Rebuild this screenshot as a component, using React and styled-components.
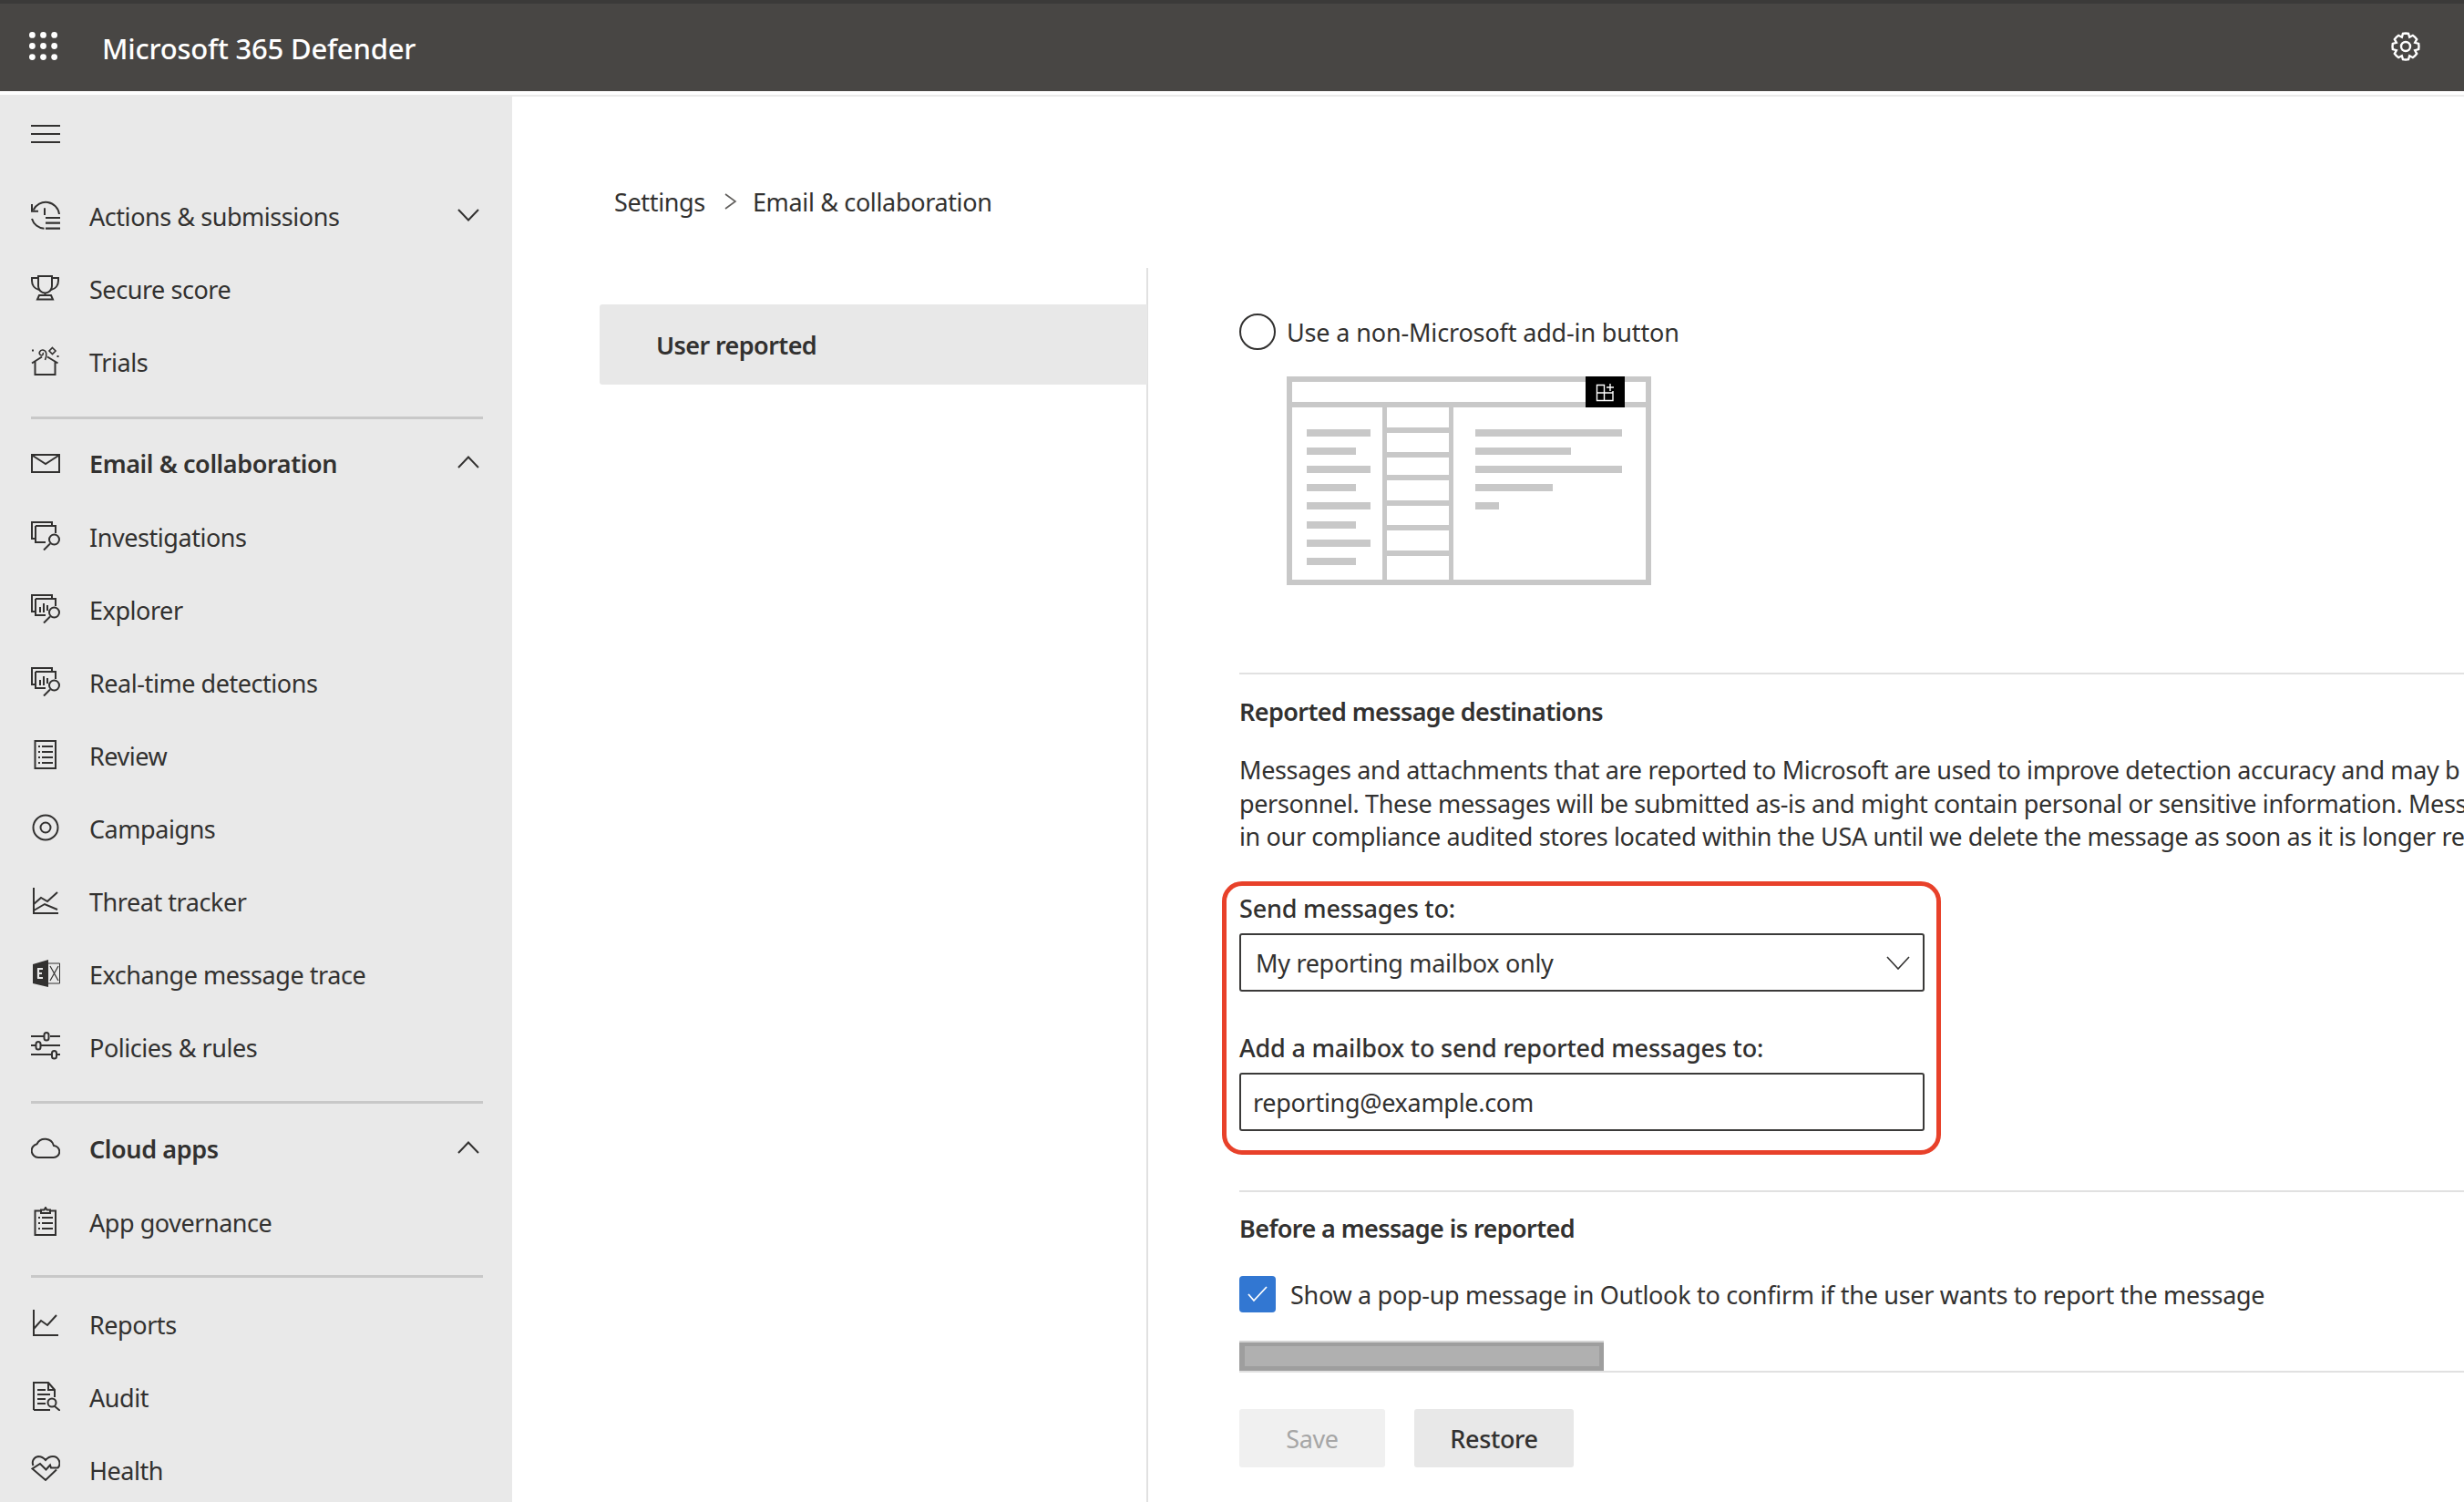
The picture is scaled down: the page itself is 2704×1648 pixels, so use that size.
import React from 'react';
import styled, { createGlobalStyle } from 'styled-components';

const Global = createGlobalStyle`
  html, body { margin: 0; padding: 0; background: #fff; overflow: hidden; }
  * { box-sizing: border-box; }
`;

const FONT = `"Noto Sans", "Open Sans", sans-serif`;

const Page = styled.div`
  width: 2704px; height: 1648px; overflow: hidden; display: flex; flex-direction: column;
  font-family: ${FONT}; font-size: 27px; color: #323130; background: #fff;
`;
const TopBar = styled.header`
  height: 100px; flex: none; display: flex; align-items: center; background: #484644;
  border-top: 4px solid #3b3a39; padding: 0 32px; color: #fff; margin-bottom: 4px;
`;
const Waffle = styled.svg`width: 31px; height: 31px; flex: none; margin-top: -4px; fill: #fff;`;
const Brand = styled.div`
  margin-left: 49px; font-size: 31px; font-weight: 500; letter-spacing: -0.2px; line-height: 40px; margin-top: 1px;
`;
const GearBtn = styled.svg`
  margin-left: auto; margin-right: 16px; margin-top: -3px; width: 32px; height: 32px; fill: none; stroke: #fff; stroke-width: 2.4;
`;
const Body = styled.div`flex: 1; display: flex; min-height: 0;`;

const Sidebar = styled.nav`
  width: 562px; flex: none; background: #e9e9e9; display: flex; flex-direction: column; padding-top: 33px;
`;
const Burger = styled.svg`
  display: block; flex: none; width: 32px; height: 20px; margin: 0 0 41px 34px; stroke: #323130; stroke-width: 2; fill: none;
`;
const NavRow = styled.div`
  height: 80px; flex: none; display: flex; align-items: center; padding: 0 36px 0 34px;
  font-weight: ${p => (p.$strong ? 600 : 400)};
  margin-top: ${p => p.$mt || 0}px;
`;
const NavIcon = styled.svg`
  width: 32px; height: 32px; flex: none; margin: -4px 32px 0 0; fill: none; stroke: #323130; stroke-width: 2;
`;
const NavLabel = styled.span`
  letter-spacing: ${p => (p.$strong ? -0.4 : -0.45)}px; line-height: 36px; white-space: nowrap;
`;
const Caret = styled.svg`
  margin-left: auto; width: 24px; height: 14px; margin-top: -4px; fill: none; stroke: #323130; stroke-width: 2;
`;
const SideRule = styled.div`
  height: 3px; flex: none; background: #c8c8c8; margin: ${p => p.$top}px 32px ${p => p.$bottom}px 34px;
`;

const Main = styled.main`
  flex: 1; min-width: 0; display: flex; flex-direction: column; border-top: 2px solid #eaeaea; padding-left: 96px;
`;
const Crumbs = styled.div`
  height: 188px; flex: none; display: flex; align-items: flex-start; padding: 96px 0 0 16px;
  line-height: 40px; white-space: nowrap; letter-spacing: -0.35px;
`;
const CrumbSep = styled.svg`
  width: 14px; height: 18px; margin: 10px 17px 0 21px; fill: none; stroke: #605e5c; stroke-width: 1.6;
`;
const Columns = styled.div`flex: 1; display: flex; min-height: 0;`;
const SubNav = styled.div`
  width: 602px; flex: none; border-right: 2px solid #e1e1e1; padding-top: 40px;
`;
const SubItem = styled.div`
  height: 88px; margin-right: -1px; background: #e8e8e8; border-radius: 3px 0 0 3px; display: flex; align-items: center; padding-left: 62px;
  font-weight: 600; letter-spacing: -0.6px;
`;
const Content = styled.div`flex: 1; min-width: 0; padding-left: 100px; overflow: hidden;`;

const RadioRow = styled.label`
  display: flex; align-items: center; gap: 12px; height: 40px; margin-top: 50px; letter-spacing: -0.15px; white-space: nowrap;
`;
const RadioDot = styled.span`
  width: 40px; height: 40px; flex: none; border-radius: 50%; border: 2px solid #323130; background: #fff;
`;
const Sketch = styled.svg`display: block; width: 400px; height: 229px; margin: 29px 0 0 52px;`;
const Rule = styled.div`height: 2px; background: #e1e1e1; margin-top: ${p => p.$mt || 0}px;`;
const Heading = styled.div`
  font-weight: 600; line-height: 36px; margin-top: ${p => p.$mt}px; letter-spacing: -0.6px; white-space: nowrap;
`;
const Paragraph = styled.div`
  margin-top: 28px; height: 110px; line-height: 36.6px; letter-spacing: -0.36px; white-space: nowrap;
`;
const Callout = styled.div`
  width: 789px; margin: 30px 0 0 -19px; border: 5px solid #e8412a; border-radius: 22px; padding: 7px 13px 21px 14px;
`;
const FieldLabel = styled.div`
  font-weight: 500; line-height: 36px; margin-top: ${p => p.$mt || 0}px; letter-spacing: -0.2px; white-space: nowrap;
`;
const FieldBox = styled.div`
  height: 64px; margin-top: ${p => p.$mt}px; border: 2px solid #3b3a39; border-radius: 3px; display: flex; align-items: center;
  padding: ${p => p.$dy || 0}px 14px 0 ${p => p.$pad}px; letter-spacing: -0.3px; white-space: nowrap;
`;
const SelectCaret = styled.svg`margin-left: auto; width: 26px; height: 15px; fill: none; stroke: #323130; stroke-width: 1.6;`;
const CheckRow = styled.label`
  display: flex; align-items: center; gap: 16px; height: 40px; margin-top: 34px; letter-spacing: -0.3px; white-space: nowrap;
`;
const CheckMark = styled.span`
  width: 40px; height: 40px; flex: none; background: #3277d2; border-radius: 4px; display: flex; align-items: center; justify-content: center;
`;
const CheckGlyph = styled.svg`width: 24px; height: 18px; fill: none; stroke: #fff; stroke-width: 1.8;`;
const RedactedBar = styled.div`
  width: 400px; height: 31px; margin-top: 33px; background: #b0b0b0; border: solid #9e9e9e; border-width: 4px 5px 5px 6px;
  box-shadow: 0 -2px 0 #d4d4d4;
`;
const Actions = styled.div`display: flex; gap: 32px; margin-top: 40px;`;
const Btn = styled.button`
  height: 64px; width: ${p => p.$w}px; border: 0; border-radius: 3px; font: inherit; font-weight: ${p => (p.disabled ? 400 : 500)};
  letter-spacing: -0.35px; padding: 1px 0 0;
  background: ${p => (p.disabled ? '#f0f0f0' : '#e8e8e8')}; color: ${p => (p.disabled ? '#a6a6a6' : '#323130')};
`;

/* ------- drawings ------- */
const gearPath = (() => {
  const n = 8, cx = 16, cy = 16, R = 14.5, r = 11;
  const pts = [];
  for (let i = 0; i < n; i++) {
    const a = (i * 2 * Math.PI) / n - Math.PI / 2;
    const w = (2 * Math.PI) / n;
    [[r, -0.5], [R, -0.27], [R, 0.0], [R, 0.27], [r, 0.5]].forEach(([rad, t]) => {
      pts.push(`${(cx + rad * Math.cos(a + t * w)).toFixed(2)} ${(cy + rad * Math.sin(a + t * w)).toFixed(2)}`);
    });
  }
  return 'M' + pts.join('L') + 'Z';
})();

const ICONS = {
  actions: <>
    <path d="M1 4v7.700h7" /><path d="M2.500 10.500A15 15 0 0 1 31 15" /><path d="M1 20A15 15 0 0 0 14.500 30.700" />
    <path d="M15 8.300V16" /><path d="M16 19h16M16 24.700h16M16 30.700h16" strokeWidth="2.200" />
  </>,
  trophy: <>
    <path d="M8 3h15v11a7.500 7.500 0 0 1-15 0z" /><path d="M8 5H1v3c0 5 3 9 8 10" /><path d="M23 5h7v3c0 5-3 9-8 10" />
    <path d="M15.500 21v3" /><path d="M9 24h13l2 4.500H7z" />
  </>,
  trials: <>
    <path d="M1 18.500L12 11.500M29.500 18.500L18 11.500M4.500 16.500V31H26.500V16.500" />
    <path d="M15.500 15C18 9 17 4.500 13 4C9.500 3.700 8 8 10.500 9.500C12.500 10.500 14 8.500 13 7" strokeWidth="1.600" />
    <path d="M23.500 1.500l3.500 3.500-3.500 3.500-3.500-3.500z" strokeWidth="1.600" /><path d="M1 4.500h2M28.500 11h2" />
  </>,
  mail: <><rect x="1" y="8" width="30" height="19" /><path d="M2 9l14 9 14-9" /></>,
  investigate: <>
    <path d="M1 4V1h22v4M1 1v18h4" /><path d="M5 5h22v8M5 5v18h11" /><circle cx="25.500" cy="20" r="5.500" /><path d="M21 24.500L14 31.500" />
  </>,
  explorer: <>
    <path d="M1 4V1h22v4M1 1v18h4" /><path d="M5 5h22v8M5 5v18h11" /><circle cx="25.500" cy="20" r="5.500" /><path d="M21 24.500L14 31.500" />
    <path d="M10 14v6M14 10v10M18 12v6" />
  </>,
  review: <>
    <rect x="4.500" y="1" width="22.500" height="30" /><path d="M8 7h2M12 7h12M8 13h2M12 13h12M8 19h2M12 19h12M8 25h2M12 25h12" />
  </>,
  target: <><circle cx="16" cy="16" r="13.500" /><circle cx="16" cy="16" r="5.500" /></>,
  threat: <>
    <path d="M3 2v28h27" /><path d="M3 20l8-7 7 4 11-10" /><path d="M3 27l12-7 14 6" />
  </>,
  exchange: <>
    <path d="M2 6l17-5v30L2 27z" fill="#323130" stroke="none" />
    <path d="M19 5h12.500v22H19" strokeWidth="1" /><path d="M21 8l9 16M30 8l-9 16" strokeWidth="1.200" />
    <path d="M7 11h6M7 16h5M7 21h6M8 11v10" stroke="#e9e9e9" strokeWidth="2.200" />
  </>,
  sliders: <>
    <path d="M0 5h14M21 5h11M0 15h5M11 15h21M0 25h22M29 25h3" />
    <rect x="14.500" y="1" width="5" height="8.500" rx="2.500" /><rect x="5.500" y="11" width="5" height="8.500" rx="2.500" /><rect x="23" y="21" width="5" height="8.500" rx="2.500" />
  </>,
  cloud: <path d="M8 27h16.500a6.500 6.500 0 0 0 .5-13A10 10 0 0 0 6.500 12.200 7.500 7.500 0 0 0 8 27z" />,
  clipboard: <>
    <path d="M11 4.500H4.500V31H27V4.500H21" /><path d="M11 7V3.500h3.500L16 1l1.500 2.500H21V7z" />
    <path d="M8 12h2M12 12h12M8 18h2M12 18h12M8 24h2M12 24h12" />
  </>,
  reports: <><path d="M3 1v28h27" /><path d="M3 22l8-9 7 5 10-11" /></>,
  audit: <>
    <path d="M3 31V1h16l7 8v8" /><path d="M19 1v8h7" /><path d="M3 31h18" /><path d="M7 9h9M7 14h14M7 19h9M7 24h9" />
    <circle cx="23" cy="23" r="4.500" /><path d="M26 27l6 5" />
  </>,
  health: (
    <path d="M2.500 12A7 7 0 0 1 8 2Q12.500 2 16 6Q19.500 2 24 2A7.500 7.500 0 0 1 29.500 14.500H22L21 11.500L16.500 16.500L10 10L1.500 15.500L16 28L28 16.500" />
  ),
};

const Icon = ({ name }) => <NavIcon viewBox="0 0 32 32">{ICONS[name]}</NavIcon>;
const Chevron = ({ up }) => (
  <Caret viewBox="0 0 24 14"><path d={up ? 'M1 13L12 1.500 23 13' : 'M1 1l11 11.500L23 1'} /></Caret>
);

const Item = ({ icon, label, strong, open, caret, mt }) => (
  <NavRow $strong={strong} $mt={mt}>
    <Icon name={icon} />
    <NavLabel $strong={strong}>{label}</NavLabel>
    {caret && <Chevron up={open} />}
  </NavRow>
);

const leftBars = [471, 491, 511, 531, 551, 572, 592, 612];
const midBars = [469, 496, 521, 549, 576, 604];
const rightBars = [[471, 161], [491, 105], [511, 161], [531, 85], [551, 26]];
const INK = '#c8c8c8';

const MailSketch = () => (
  <Sketch viewBox="0 0 400 229">
    <rect x="3" y="3" width="394" height="223" fill="#fff" stroke={INK} strokeWidth="6" />
    <rect x="0" y="28" width="400" height="6" fill={INK} />
    <rect x="105" y="30" width="5" height="199" fill={INK} />
    <rect x="178" y="30" width="5" height="199" fill={INK} />
    {midBars.map(y => <rect key={y} x="105" y={y - 413} width="78" height="6" fill={INK} />)}
    {leftBars.map((y, i) => <rect key={y} x="22" y={y - 413} width={i % 2 ? 54 : 70} height="8" fill={INK} />)}
    {rightBars.map(([y, w]) => <rect key={y} x="207" y={y - 413} width={w} height="8" fill={INK} />)}
    <rect x="328" y="0" width="43" height="34" fill="#000" />
    <path d="M340.500 9.500h8v17h-8zM340.500 18h17.500v8.500h-9.500M358 18v-2M355 8v8M351 12h8" fill="none" stroke="#fff" strokeWidth="1.400" />
  </Sketch>
);

export default function App() {
  return (
    <Page>
      <Global />
      <TopBar>
        <Waffle viewBox="0 0 32 32">
          {[3.500, 16, 28.500].flatMap(y => [3.500, 16, 28.500].map(x => <circle key={`${x}-${y}`} cx={x} cy={y} r="3.500" />))}
        </Waffle>
        <Brand>Microsoft 365 Defender</Brand>
        <GearBtn viewBox="0 0 32 32"><path d={gearPath} /><circle cx="16" cy="16" r="5" /></GearBtn>
      </TopBar>
      <Body>
        <Sidebar>
          <Burger viewBox="0 0 32 20"><path d="M0 1h32M0 10h32M0 19h32" /></Burger>
          <Item icon="actions" label="Actions & submissions" caret />
          <Item icon="trophy" label="Secure score" />
          <Item icon="trials" label="Trials" />
          <SideRule $top={19} $bottom={9} />
          <Item icon="mail" label="Email & collaboration" strong caret open />
          <Item icon="investigate" label="Investigations" mt={1} />
          <Item icon="explorer" label="Explorer" />
          <Item icon="explorer" label="Real-time detections" />
          <Item icon="review" label="Review" />
          <Item icon="target" label="Campaigns" />
          <Item icon="threat" label="Threat tracker" />
          <Item icon="exchange" label="Exchange message trace" />
          <Item icon="sliders" label="Policies & rules" />
          <SideRule $top={18} $bottom={10} />
          <Item icon="cloud" label="Cloud apps" strong caret open />
          <Item icon="clipboard" label="App governance" mt={1} />
          <SideRule $top={17} $bottom={12} />
          <Item icon="reports" label="Reports" />
          <Item icon="audit" label="Audit" />
          <Item icon="health" label="Health" />
        </Sidebar>
        <Main>
          <Crumbs>
            <span>Settings</span>
            <CrumbSep viewBox="0 0 14 18"><path d="M1 1l11 8L1 17" /></CrumbSep>
            <span>Email &amp; collaboration</span>
          </Crumbs>
          <Columns>
            <SubNav><SubItem>User reported</SubItem></SubNav>
            <Content>
              <RadioRow><RadioDot />Use a non-Microsoft add-in button</RadioRow>
              <MailSketch />
              <Rule $mt={96} />
              <Heading $mt={23}>Reported message destinations</Heading>
              <Paragraph>
                Messages and attachments that are reported to Microsoft are used to improve detection accuracy and may b<br />
                personnel. These messages will be submitted as-is and might contain personal or sensitive information. Mess<br />
                in our compliance audited stores located within the USA until we delete the message as soon as it is longer re
              </Paragraph>
              <Callout>
                <FieldLabel>Send messages to:</FieldLabel>
                <FieldBox $mt={9} $pad={16}>
                  My reporting mailbox only
                  <SelectCaret viewBox="0 0 26 15"><path d="M1 1l12 13L25 1" /></SelectCaret>
                </FieldBox>
                <FieldLabel $mt={44}>Add a mailbox to send reported messages to:</FieldLabel>
                <FieldBox $mt={9} $pad={13} $dy={1}>reporting@example.com</FieldBox>
              </Callout>
              <Rule $mt={39} />
              <Heading $mt={22}>Before a message is reported</Heading>
              <CheckRow>
                <CheckMark><CheckGlyph viewBox="0 0 24 18"><path d="M2 9l6 7L22 1" /></CheckGlyph></CheckMark>
                Show a pop-up message in Outlook to confirm if the user wants to report the message
              </CheckRow>
              <RedactedBar />
              <Rule />
              <Actions>
                <Btn $w={160} disabled>Save</Btn>
                <Btn $w={175}>Restore</Btn>
              </Actions>
            </Content>
          </Columns>
        </Main>
      </Body>
    </Page>
  );
}
